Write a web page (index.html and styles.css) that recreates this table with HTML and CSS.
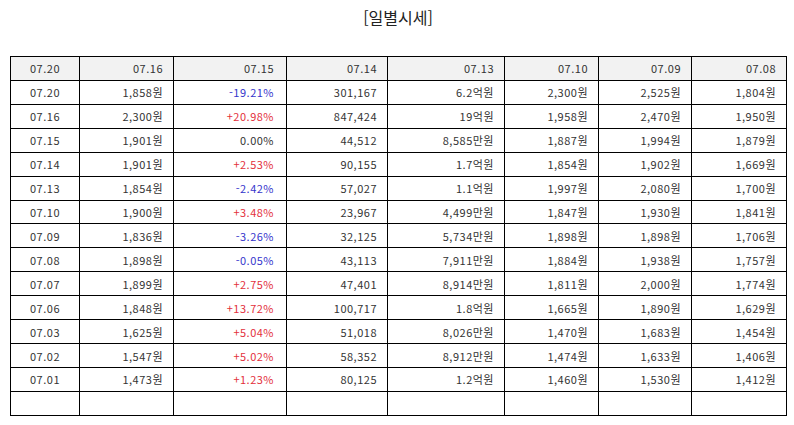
FILE: index.html
```html
<!DOCTYPE html>
<html lang="ko">
<head>
<meta charset="utf-8">
<link rel="stylesheet" href="styles.css">
</head>
<body>
<div class="page">
  <h2 class="title">[일별시세]</h2>
  <table class="daily">
    <colgroup>
      <col class="w1"><col class="w2"><col class="w3"><col class="w4"><col class="w5"><col class="w6"><col class="w7"><col class="w8">
    </colgroup>
    <thead>
      <tr><th class="c">07.20</th><th>07.16</th><th class="p">07.15</th><th>07.14</th><th>07.13</th><th>07.10</th><th>07.09</th><th>07.08</th></tr>
    </thead>
    <tbody>
      <tr><td class="c">07.20</td><td>1,858원</td><td class="p dn">-19.21%</td><td>301,167</td><td>6.2억원</td><td>2,300원</td><td>2,525원</td><td>1,804원</td></tr>
      <tr><td class="c">07.16</td><td>2,300원</td><td class="p up">+20.98%</td><td>847,424</td><td>19억원</td><td>1,958원</td><td>2,470원</td><td>1,950원</td></tr>
      <tr><td class="c">07.15</td><td>1,901원</td><td class="p">0.00%</td><td>44,512</td><td>8,585만원</td><td>1,887원</td><td>1,994원</td><td>1,879원</td></tr>
      <tr><td class="c">07.14</td><td>1,901원</td><td class="p up">+2.53%</td><td>90,155</td><td>1.7억원</td><td>1,854원</td><td>1,902원</td><td>1,669원</td></tr>
      <tr><td class="c">07.13</td><td>1,854원</td><td class="p dn">-2.42%</td><td>57,027</td><td>1.1억원</td><td>1,997원</td><td>2,080원</td><td>1,700원</td></tr>
      <tr><td class="c">07.10</td><td>1,900원</td><td class="p up">+3.48%</td><td>23,967</td><td>4,499만원</td><td>1,847원</td><td>1,930원</td><td>1,841원</td></tr>
      <tr><td class="c">07.09</td><td>1,836원</td><td class="p dn">-3.26%</td><td>32,125</td><td>5,734만원</td><td>1,898원</td><td>1,898원</td><td>1,706원</td></tr>
      <tr><td class="c">07.08</td><td>1,898원</td><td class="p dn">-0.05%</td><td>43,113</td><td>7,911만원</td><td>1,884원</td><td>1,938원</td><td>1,757원</td></tr>
      <tr><td class="c">07.07</td><td>1,899원</td><td class="p up">+2.75%</td><td>47,401</td><td>8,914만원</td><td>1,811원</td><td>2,000원</td><td>1,774원</td></tr>
      <tr><td class="c">07.06</td><td>1,848원</td><td class="p up">+13.72%</td><td>100,717</td><td>1.8억원</td><td>1,665원</td><td>1,890원</td><td>1,629원</td></tr>
      <tr><td class="c">07.03</td><td>1,625원</td><td class="p up">+5.04%</td><td>51,018</td><td>8,026만원</td><td>1,470원</td><td>1,683원</td><td>1,454원</td></tr>
      <tr><td class="c">07.02</td><td>1,547원</td><td class="p up">+5.02%</td><td>58,352</td><td>8,912만원</td><td>1,474원</td><td>1,633원</td><td>1,406원</td></tr>
      <tr><td class="c">07.01</td><td>1,473원</td><td class="p up">+1.23%</td><td>80,125</td><td>1.2억원</td><td>1,460원</td><td>1,530원</td><td>1,412원</td></tr>
      <tr><td class="c"></td><td></td><td></td><td></td><td></td><td></td><td></td><td></td></tr>
    </tbody>
  </table>
</div>
</body>
</html>
```
FILE: styles.css
```css
html, body {
  margin: 0;
  padding: 0;
  background: #ffffff;
}
.page {
  padding: 0 8px 0 10px;
  font-family: "Noto Sans CJK KR", "Noto Sans", sans-serif;
  color: #333333;
}
.title {
  margin: 0;
  height: 56px;
  padding-top: 6px;
  box-sizing: border-box;
  text-align: center;
  font-size: 16px;
  font-weight: normal;
  line-height: 22px;
  color: #222222;
}
.daily {
  width: 776px;
  border-collapse: collapse;
  table-layout: fixed;
  font-size: 11px;
  letter-spacing: 0.5px;
}
.daily col.w1 { width: 69px; }
.daily col.w2 { width: 94px; }
.daily col.w3 { width: 113px; }
.daily col.w4 { width: 101px; }
.daily col.w5 { width: 117px; }
.daily col.w6 { width: 94px; }
.daily col.w7 { width: 93px; }
.daily col.w8 { width: 95px; }
.daily th, .daily td {
  border: 1px solid #000000;
  height: 22.93px;
  padding: 0 10px 0 0;
  text-align: right;
  font-weight: normal;
  line-height: 14px;
  white-space: nowrap;
}
.daily th {
  background: #f2f2f2;
}
.daily .c {
  text-align: center;
  padding: 0;
}
.daily .p {
  padding-right: 12px;
}
.daily .up { color: #e3303c; }
.daily .dn { color: #3535cc; }
```
